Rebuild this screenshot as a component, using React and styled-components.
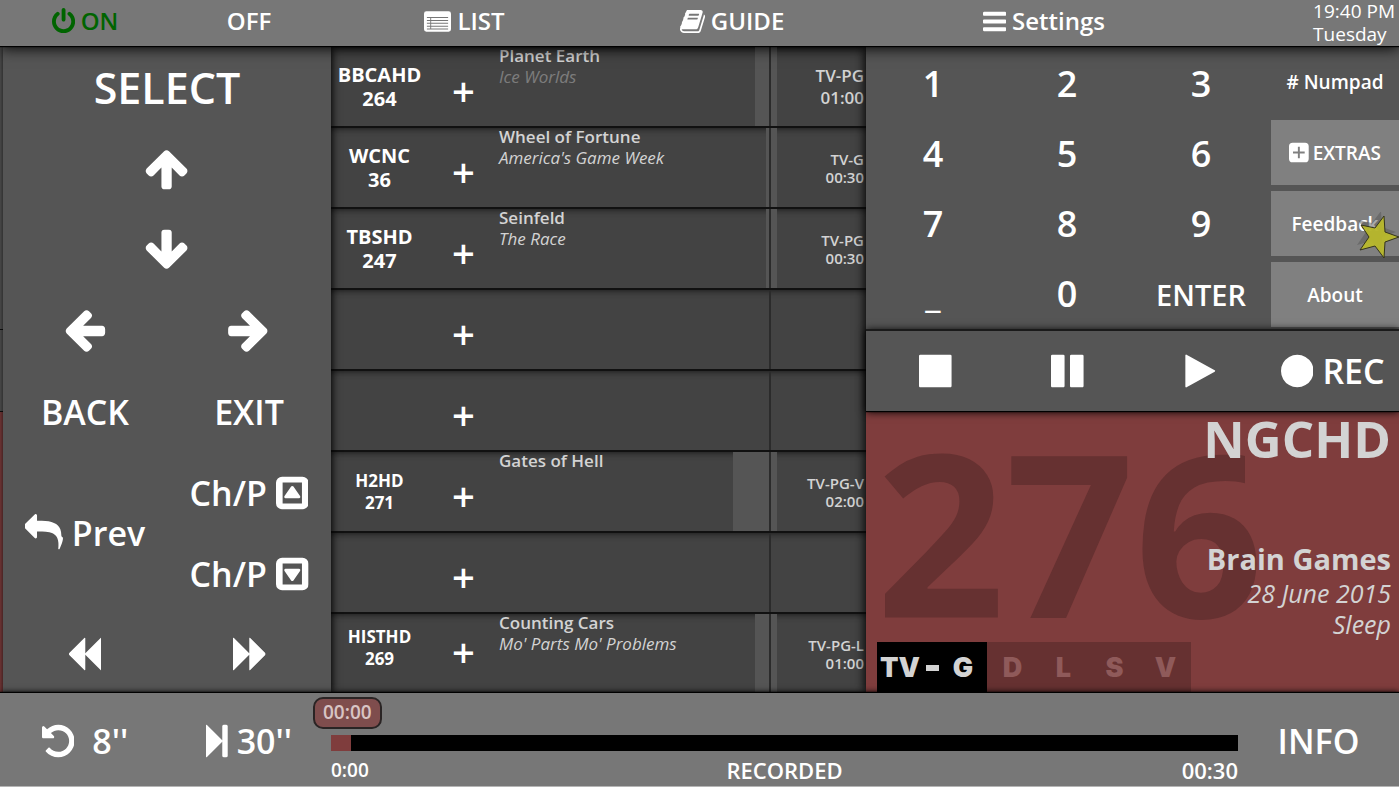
import React, { useState } from 'react'
import styled, { createGlobalStyle } from 'styled-components'

const rows = [
    { name: "BBCAHD", num: "264", title: "Planet Earth", sub: "Ice Worlds", dim: true, left: 14, rating: "TV-PG", time: "01:00", big: true },
    { name: "WCNC", num: "36", title: "Wheel of Fortune", sub: "America's Game Week", left: 3, rating: "TV-G", time: "00:30" },
    { name: "TBSHD", num: "247", title: "Seinfeld", sub: "The Race", left: 3, rating: "TV-PG", time: "00:30" },
    {},
    {},
    { name: "H2HD", num: "271", small: true, title: "Gates of Hell", left: 36, rating: "TV-PG-V", time: "02:00" },
    {},
    { name: "HISTHD", num: "269", small: true, title: "Counting Cars", sub: "Mo' Parts Mo' Problems", left: 14, rating: "TV-PG-L", time: "01:00" },
]

const paths = {
    power: "M1664 896q0 156-61 298t-164 245-245 164-298 61-298-61-245-164-164-245-61-298q0-182 80.5-343t226.5-270q43-32 95.5-25t83.5 50q32 42 24.5 94.5t-49.5 84.5q-98 74-151.5 181t-53.5 228q0 104 40.5 198.5t109.5 163.5 163.5 109.5 198.5 40.5 198.5-40.5 163.5-109.5 109.5-163.5 40.5-198.5q0-121-53.5-228t-151.5-181q-42-32-49.5-84.5t24.5-94.5q31-43 84-50t95 25q146 109 226.5 270t80.5 343zm-640-768v640q0 52-38 90t-90 38-90-38-38-90v-640q0-52 38-90t90-38 90 38 38 90z",
    book: "M1703 478q40 57 18 129l-275 906q-19 64-76.5 107.5t-122.5 43.5h-923q-77 0-148.5-53.5t-99.5-131.5q-24-67-2-127 0-4 3-27t4-37q1-8-3-21.5t-3-19.5q2-11 8-21t16.5-23.5 16.5-23.5q23-38 45-91.5t30-91.5q3-10 .5-30t-.5-28q3-11 17-28t17-23q21-36 42-92t25-90q1-9-2.5-32t.5-28q4-13 22-30.5t22-22.5q19-26 42.5-84.5t27.5-96.5q1-8-3-25.5t-2-26.5q2-8 9-18t18-23 17-21q8-12 16.5-30.5t15-35 16-36 19.5-32 26.5-23.5 36-11.5 47.5 5.5l-1 3q38-9 51-9h761q74 0 114 56t18 130l-274 906q-36 119-71.5 153.5t-128.5 34.5h-869q-27 0-38 15-11 16-1 43 24 70 144 70h923q29 0 56-15.5t35-41.5l300-987q7-22 5-57 38 15 59 43zm-1064 2q-4 13 2 22.5t20 9.5h608q13 0 25.5-9.5t16.5-22.5l21-64q4-13-2-22.5t-20-9.5h-608q-13 0-25.5 9.5t-16.5 22.5zm-83 256q-4 13 2 22.5t20 9.5h608q13 0 25.5-9.5t16.5-22.5l21-64q4-13-2-22.5t-20-9.5h-608q-13 0-25.5 9.5t-16.5 22.5z",
    list: "M224 216h1472a160 160 0 0 1 160 160v1040a160 160 0 0 1-160 160H224a160 160 0 0 1-160-160V376a160 160 0 0 1 160-160zM256 600v70h1408v-70zM256 790v70h1408v-70zM256 980v70h1408v-70zM256 1170v70h1408v-70zM256 1360v70h1408v-70zM480 670v120h60v-120zM480 860v120h60v-120zM480 1050v120h60v-120zM480 1240v120h60v-120z",
    bars: "M1664 1344v128q0 26-19 45t-45 19h-1408q-26 0-45-19t-19-45v-128q0-26 19-45t45-19h1408q26 0 45 19t19 45zm0-512v128q0 26-19 45t-45 19h-1408q-26 0-45-19t-19-45v-128q0-26 19-45t45-19h1408q26 0 45 19t19 45zm0-512v128q0 26-19 45t-45 19h-1408q-26 0-45-19t-19-45v-128q0-26 19-45t45-19h1408q26 0 45 19t19 45z",
    arrow: "M1664 896v128q0 53-32.5 90.5t-84.5 37.5h-704l293 294q38 36 38 90t-38 90l-75 76q-37 37-90 37-52 0-91-37l-651-652q-37-37-37-90 0-52 37-91l651-650q38-38 91-38 52 0 90 38l75 74q38 38 38 91t-38 91l-293 293h704q52 0 84.5 37.5t32.5 90.5z",
    reply: "M1792 1120q0 166-127 451-3 7-10.5 24t-13.5 30-13 22q-12 17-28 17-15 0-23.5-10t-8.5-25q0-9 2.5-26.5t2.5-23.5q5-68 5-123 0-112-19.5-200.5t-54-153.5-89-112-117-79.5-146.5-48.5-168.5-24-192.5-7h-224v256q0 26-19 45t-45 19-45-19l-512-512q-19-19-19-45t19-45l512-512q19-19 45-19t45 19 19 45v256h224q713 0 875 403 53 134 53 333z",
    caretUp: "M416 128h960a288 288 0 0 1 288 288v960a288 288 0 0 1-288 288H416a288 288 0 0 1-288-288V416a288 288 0 0 1 288-288zM440 400v992h912V400zM896 560q35 0 55 28l310 450q22 32 8 66t-53 34H576q-39 0-53-34t8-66l310-450q20-28 55-28z",
    rewind: "M1619 141q19-19 32-13t13 32v1472q0 26-13 32t-32-13l-710-710q-9-9-13-19v710q0 26-13 32t-32-13l-710-710q-19-19-19-45t19-45l710-710q19-19 32-13t13 32v710q4-10 13-19z",
    undo: "M1664 896q0 156-61 298t-164 245-245 164-298 61q-172 0-327-72.5t-264-204.5q-7-10-6.5-22.5t8.5-20.5l137-138q10-9 25-9 16 2 23 12 73 95 179 147t225 52q104 0 198.5-40.5t163.5-109.5 109.5-163.5 40.5-198.5-40.5-198.5-109.5-163.5-163.5-109.5-198.5-40.5q-98 0-188 35.5t-160 101.5l137 138q31 30 14 69-17 40-59 40h-448q-26 0-45-19t-19-45v-448q0-42 40-59 39-17 69 14l130 129q107-101 244.5-156.5t284.5-55.5q156 0 298 61t245 164 164 245 61 298z",
    step: "M429 1651q-19 19-32 13t-13-32v-1472q0-26 13-32t32 13l710 710q8 8 13 19v-678q0-26 19-45t45-19h128q26 0 45 19t19 45v1408q0 26-19 45t-45 19h-128q-26 0-45-19t-19-45v-678q-5 10-13 19z",
    stop: "M1664 192v1408q0 26-19 45t-45 19h-1408q-26 0-45-19t-19-45v-1408q0-26 19-45t45-19h1408q26 0 45 19t19 45z",
    pause: "M1664 192v1408q0 26-19 45t-45 19h-512q-26 0-45-19t-19-45v-1408q0-26 19-45t45-19h512q26 0 45 19t19 45zm-896 0v1408q0 26-19 45t-45 19h-512q-26 0-45-19t-19-45v-1408q0-26 19-45t45-19h512q26 0 45 19t19 45z",
    play: "M1576 927l-1328 738q-23 13-39.5 3t-16.5-36v-1472q0-26 16.5-36t39.5 3l1328 738q23 13 23 31t-23 31z",
    circle: "M1664 896q0 209-103 385.5t-279.5 279.5-385.5 103-385.5-103-279.5-279.5-103-385.5 103-385.5 279.5-279.5 385.5-103 385.5 103 279.5 279.5 103 385.5z",
    plusBox: "M416 128h960a288 288 0 0 1 288 288v960a288 288 0 0 1-288 288H416a288 288 0 0 1-288-288V416a288 288 0 0 1 288-288zM820 440v380H440v152h380v380h152V972h380V820H972V440z",
}

const Icon = ({ name, size = 38, turn = 0, box = "128 0 1536 1792" }) => (
    <Svg viewBox={box} $size={size} $turn={turn} aria-hidden="true">
        <path d={paths[name]} fillRule={name === "caretUp" || name === "list" || name === "plusBox" ? "evenodd" : "nonzero"}/>
    </Svg>
)

const App = () => {
    const [position, setPosition] = useState(0)

    return (
        <Page>
            <GlobalStyle/>
            <TopBar>
                <TopButton $on><Icon name="power" size={27}/>ON</TopButton>
                <TopButton>OFF</TopButton>
                <TopButton><Icon name="list" size={27} box="64 0 1792 1792"/>LIST</TopButton>
                <TopButton><Icon name="book" size={27} box="64 0 1664 1792"/>GUIDE</TopButton>
                <TopButton><Icon name="bars" size={27}/>Settings</TopButton>
                <Clock>19:40 PM<br/>Tuesday</Clock>
            </TopBar>

            <Main>
                <Edge><EdgePart/><EdgePart/><EdgePart $red/></Edge>
                <Remote>
                    <Wide><Key $size={43}>SELECT</Key></Wide>
                    <Wide><Key aria-label="Up"><Icon name="arrow" size={48} turn={90} box="128 64 1536 1792"/></Key></Wide>
                    <Wide><Key aria-label="Down"><Icon name="arrow" size={48} turn={270} box="128 64 1536 1792"/></Key></Wide>
                    <Key aria-label="Left"><Icon name="arrow" size={48} box="128 64 1536 1792"/></Key>
                    <Key aria-label="Right"><Icon name="arrow" size={48} turn={180} box="128 64 1536 1792"/></Key>
                    <Key>BACK</Key>
                    <Key>EXIT</Key>
                    <Tall><Key><Icon name="reply" box="0 0 1792 1792"/>Prev</Key></Tall>
                    <Key>Ch/P<Icon name="caretUp"/></Key>
                    <Key>Ch/P<Icon name="caretUp" turn={180}/></Key>
                    <Key aria-label="Rewind"><Icon name="rewind"/></Key>
                    <Key aria-label="Fast forward"><Icon name="rewind" turn={180}/></Key>
                </Remote>

                <List>
                    {rows.map((row, i) => {
                        const last = i === rows.length - 1
                        return (
                            <Row key={i} $last={last}>
                                <Channel $small={row.small} $last={last}>{row.name}<br/>{row.num}</Channel>
                                <Add $last={last} aria-label="Add channel">+</Add>
                                <Show>
                                    <Titles>
                                        <Title>{row.title}</Title>
                                        <SubTitle $dim={row.dim}>{row.sub}</SubTitle>
                                    </Titles>
                                    {row.left && <Remaining style={{ width: row.left }}/>}
                                </Show>
                                <Rating $big={row.big} $marked={row.left}>{row.rating}<br/>{row.time}</Rating>
                            </Row>
                        )
                    })}
                </List>

                <Right>
                    <PadPanel>
                        <Pad>
                            {["1", "2", "3", "4", "5", "6", "7", "8", "9", "_", "0"].map((n) => (
                                <Key key={n} $size={36}>{n}</Key>
                            ))}
                            <Key $size={29}>ENTER</Key>
                        </Pad>
                        <Tabs>
                            <Tab $active># Numpad</Tab>
                            <Tab><Icon name="plusBox" size={23}/>EXTRAS</Tab>
                            <Tab>
                                Feedback
                                <Star viewBox="-25 -25 50 50" aria-hidden="true">
                                    <polygon points={starPoints} transform="translate(-3 -5)" fill="#555" opacity="0.5"/>
                                    <polygon points={starPoints} fill="#b9b92b" fillOpacity="0.94" stroke="#34341c" strokeWidth="1"/>
                                </Star>
                            </Tab>
                            <Tab>About</Tab>
                        </Tabs>
                    </PadPanel>
                    <Transport>
                        <Key aria-label="Stop"><Icon name="stop"/></Key>
                        <Key aria-label="Pause"><Icon name="pause"/></Key>
                        <Key aria-label="Play"><Icon name="play"/></Key>
                        <Key><Icon name="circle"/>REC</Key>
                    </Transport>
                    <Now>
                        <BigNumber>276</BigNumber>
                        <Station>NGCHD</Station>
                        <Program>Brain Games</Program>
                        <Episode>28 June 2015<br/>Sleep</Episode>
                        <Ratings>
                            <RatingBox><span>TV</span><Dash/><Grade>G</Grade></RatingBox>
                            {["D", "L", "S", "V"].map((r) => <Flag key={r}>{r}</Flag>)}
                        </Ratings>
                    </Now>
                </Right>
            </Main>

            <BottomBar>
                <Key><Icon name="undo"/>&nbsp;8''</Key>
                <Key><Icon name="step" box="384 0 1024 1792"/>30''</Key>
                <Timeline>
                    <Bubble htmlFor="seek">00:00</Bubble>
                    <Seek id="seek" type="range" min="0" max="1800" value={position} onChange={(e) => setPosition(Number(e.target.value))}/>
                    <Times>
                        <Time>0:00</Time>
                        <Time $large>RECORDED</Time>
                        <Time $large>00:30</Time>
                    </Times>
                </Timeline>
                <Key>INFO</Key>
            </BottomBar>
        </Page>
    )
}

export default App

const starPoints = "21,0 7,5 6,21 -3,9 -18,13 -9,0 -17,-12 -3,-9 6,-21 7,-5"

const GlobalStyle = createGlobalStyle`
    * {
        box-sizing: border-box;
    }
    body {
        margin: 0;
        background: #555;
        color: #fff;
        font-family: "Open Sans", "Noto Sans", sans-serif;
        font-weight: 600;
    }
    button {
        font: inherit;
        color: inherit;
        background: none;
        border: none;
        padding: 0;
        cursor: pointer;
    }
`
const Page = styled.div`
    display: grid;
    grid-template-rows: 46px 1fr 94px;
    height: 100vh;
    min-height: 640px;
    overflow: hidden;
`
const Svg = styled.svg`
    height: ${(p) => p.$size}px;
    flex: none;
    fill: currentColor;
    transform: rotate(${(p) => p.$turn}deg);
`
const TopBar = styled.header`
    position: relative;
    z-index: 2;
    display: grid;
    grid-template-columns: 164fr 164fr 267fr 268fr 356fr 177fr;
    padding-left: 3px;
    background: #777;
    box-shadow: 0 1px 1px #000, 0 2px 14px #000;
`
const TopButton = styled.button`
    display: flex;
    align-items: center;
    justify-content: center;
    gap: 6px;
    font-size: 24px;
    line-height: 28px;
    color: ${(p) => (p.$on ? "#006400" : "#fff")};
    && {
        padding-bottom: 4px;
    }
`
const Clock = styled.div`
    justify-self: end;
    padding-right: 4px;
    font-size: 19px;
    line-height: 23px;
    font-weight: 400;
    white-space: nowrap;
`
const Main = styled.main`
    display: grid;
    grid-template-columns: 3px 328fr 535fr 533fr;
    min-height: 0;
    border-top: 1px solid #000;
`
const Edge = styled.div`
    display: grid;
    grid-template-rows: 282fr 82fr 281fr;
    gap: 1px;
    background: #111;
`
const EdgePart = styled.div`
    background: ${(p) => (p.$red ? "#7f3d3d" : "#555")};
`
const Remote = styled.section`
    position: relative;
    z-index: 1;
    display: grid;
    grid-template-columns: 1fr 1fr;
    grid-template-rows: repeat(7, 81fr) 79fr;
    background: #555;
    box-shadow: 1px 0 8px #000;
`
const Wide = styled.div`
    display: grid;
    grid-column: span 2;
`
const Tall = styled.div`
    display: grid;
    grid-row: span 2;
`
const Key = styled.button`
    display: flex;
    align-items: center;
    justify-content: center;
    gap: 9px;
    min-width: 0;
    min-height: 0;
    font-size: ${(p) => p.$size || 34}px;
    line-height: 1;
    white-space: nowrap;
`
const List = styled.section`
    display: grid;
    grid-template-rows: repeat(7, 81fr) 79fr;
    min-height: 0;
    background: #434343;
`
const Row = styled.div`
    display: grid;
    grid-template-columns: 97fr 71fr 272fr 95fr;
    min-height: 0;
    border-bottom: ${(p) => (p.$last ? "none" : "2px solid #111")};
    box-shadow: inset 0 5px 6px -4px #1c1c1c;
`
const Channel = styled.div`
    align-self: center;
    text-align: center;
    font-weight: 700;
    padding-bottom: ${(p) => (p.$last ? 12 : 0)}px;
    font-size: ${(p) => (p.$small ? 17 : 20)}px;
    line-height: ${(p) => (p.$small ? 22 : 24)}px;
`
const Add = styled.button`
    font-size: 40px;
    line-height: 1;
    && {
        padding-top: ${(p) => (p.$last ? 0 : 8)}px;
        padding-bottom: ${(p) => (p.$last ? 4 : 0)}px;
    }
`
const Show = styled.div`
    display: flex;
    min-width: 0;
    border-right: 2px solid #2b2b2b;
`
const Titles = styled.div`
    flex: 1;
    min-width: 0;
    color: #d3d3d3;
    font-size: 17px;
    white-space: nowrap;
`
const Title = styled.div`
    line-height: 18px;
`
const SubTitle = styled.div`
    line-height: 23px;
    font-weight: 400;
    font-style: italic;
    opacity: ${(p) => (p.$dim ? 0.4 : 1)};
`
const Remaining = styled.div`
    background: #555;
`
const Rating = styled.div`
    display: grid;
    align-content: center;
    padding-right: 2px;
    border-left: 6px solid ${(p) => (p.$marked ? "#555" : "transparent")};
    color: #d3d3d3;
    text-align: right;
    font-size: ${(p) => (p.$big ? 17 : 15)}px;
    line-height: ${(p) => (p.$big ? 22 : 18)}px;
    white-space: nowrap;
`
const Right = styled.section`
    position: relative;
    z-index: 1;
    display: grid;
    grid-template-rows: 282fr 82fr 282fr;
    min-height: 0;
    min-width: 0;
    background: #555;
    box-shadow: -1px 0 10px #000;
`
const PadPanel = styled.div`
    display: grid;
    grid-template-columns: 402fr 131fr;
    min-height: 0;
`
const Pad = styled.div`
    display: grid;
    grid-template-columns: repeat(3, 1fr);
    grid-template-rows: repeat(4, 1fr);
    padding-top: 2px;
`
const Tabs = styled.div`
    display: grid;
    grid-template-rows: repeat(4, 1fr);
    gap: 6px;
    padding: 2px 0 2px 3px;
`
const Tab = styled.button`
    position: relative;
    display: flex;
    align-items: center;
    justify-content: center;
    gap: 4px;
    font-size: 19px;
    white-space: nowrap;
    && {
        background: ${(p) => (p.$active ? "none" : "#808080")};
    }
`
const Star = styled.svg`
    position: absolute;
    right: -4px;
    bottom: -6px;
    width: 50px;
    height: 50px;
`
const Transport = styled.div`
    position: relative;
    z-index: 1;
    display: grid;
    grid-template-columns: repeat(4, 1fr);
    min-height: 0;
    padding-left: 3px;
    background: #555;
    border-top: 2px solid #1a1a1a;
    box-shadow: 0 1px 1px #000, 0 1px 8px #000;
`
const Now = styled.div`
    position: relative;
    display: flex;
    flex-direction: column;
    min-height: 0;
    overflow: hidden;
    padding: 0 8px 0 11px;
    background: #7f3d3d;
    color: #d3d3d3;
    text-align: right;
`
const BigNumber = styled.div`
    position: absolute;
    left: 10px;
    top: 6px;
    font-size: 226px;
    line-height: 226px;
    font-weight: 700;
    color: #663131;
`
const Station = styled.div`
    position: relative;
    font-size: 51px;
    line-height: 54px;
    font-weight: 700;
`
const Program = styled.div`
    position: relative;
    margin-top: auto;
    font-size: 29px;
    line-height: 38px;
    font-weight: 700;
`
const Episode = styled.div`
    position: relative;
    margin-bottom: 2px;
    font-size: 25px;
    line-height: 31px;
    font-weight: 400;
    font-style: italic;
`
const Ratings = styled.div`
    position: relative;
    display: flex;
    height: 51px;
    font-family: Inter, "Liberation Sans", sans-serif;
    font-weight: 900;
    font-size: 27px;
    line-height: 52px;
`
const RatingBox = styled.div`
    display: flex;
    align-items: center;
    gap: 6px;
    width: 110px;
    padding: 0 14px 0 3px;
    background: #000;
`
const Dash = styled.i`
    width: 13px;
    height: 6px;
    background: #d3d3d3;
`
const Grade = styled.span`
    margin-left: auto;
`
const Flag = styled.div`
    width: 51px;
    text-align: center;
    background: #663131;
    color: #8f5a5a;
`
const BottomBar = styled.footer`
    position: relative;
    z-index: 2;
    display: grid;
    grid-template-columns: 164fr 164fr 907fr 161fr;
    padding-left: 3px;
    background: #777;
    border-bottom: 1px solid #b5b5b5;
    box-shadow: 0 -1px 1px #000, 0 -1px 6px #000;
`
const Timeline = styled.div`
    display: flex;
    flex-direction: column;
    padding-top: 4px;
`
const Bubble = styled.label`
    align-self: flex-start;
    margin-left: -18px;
    padding: 0 8px;
    height: 32px;
    border: 2px solid #2a2424;
    border-radius: 10px;
    background: #7f4d4d;
    color: #d8c4c4;
    font-size: 19px;
    line-height: 27px;
`
const Seek = styled.input`
    appearance: none;
    width: 100%;
    height: 16px;
    margin: 6px 0 0;
    background: #000;
    &::-webkit-slider-thumb {
        appearance: none;
        width: 20px;
        height: 16px;
        background: #7f3d3d;
    }
`
const Times = styled.div`
    display: grid;
    grid-template-columns: 1fr auto 1fr;
    align-items: center;
    height: 38px;
    & > :last-child {
        text-align: right;
    }
`
const Time = styled.span`
    font-size: ${(p) => (p.$large ? 22 : 19)}px;
`
